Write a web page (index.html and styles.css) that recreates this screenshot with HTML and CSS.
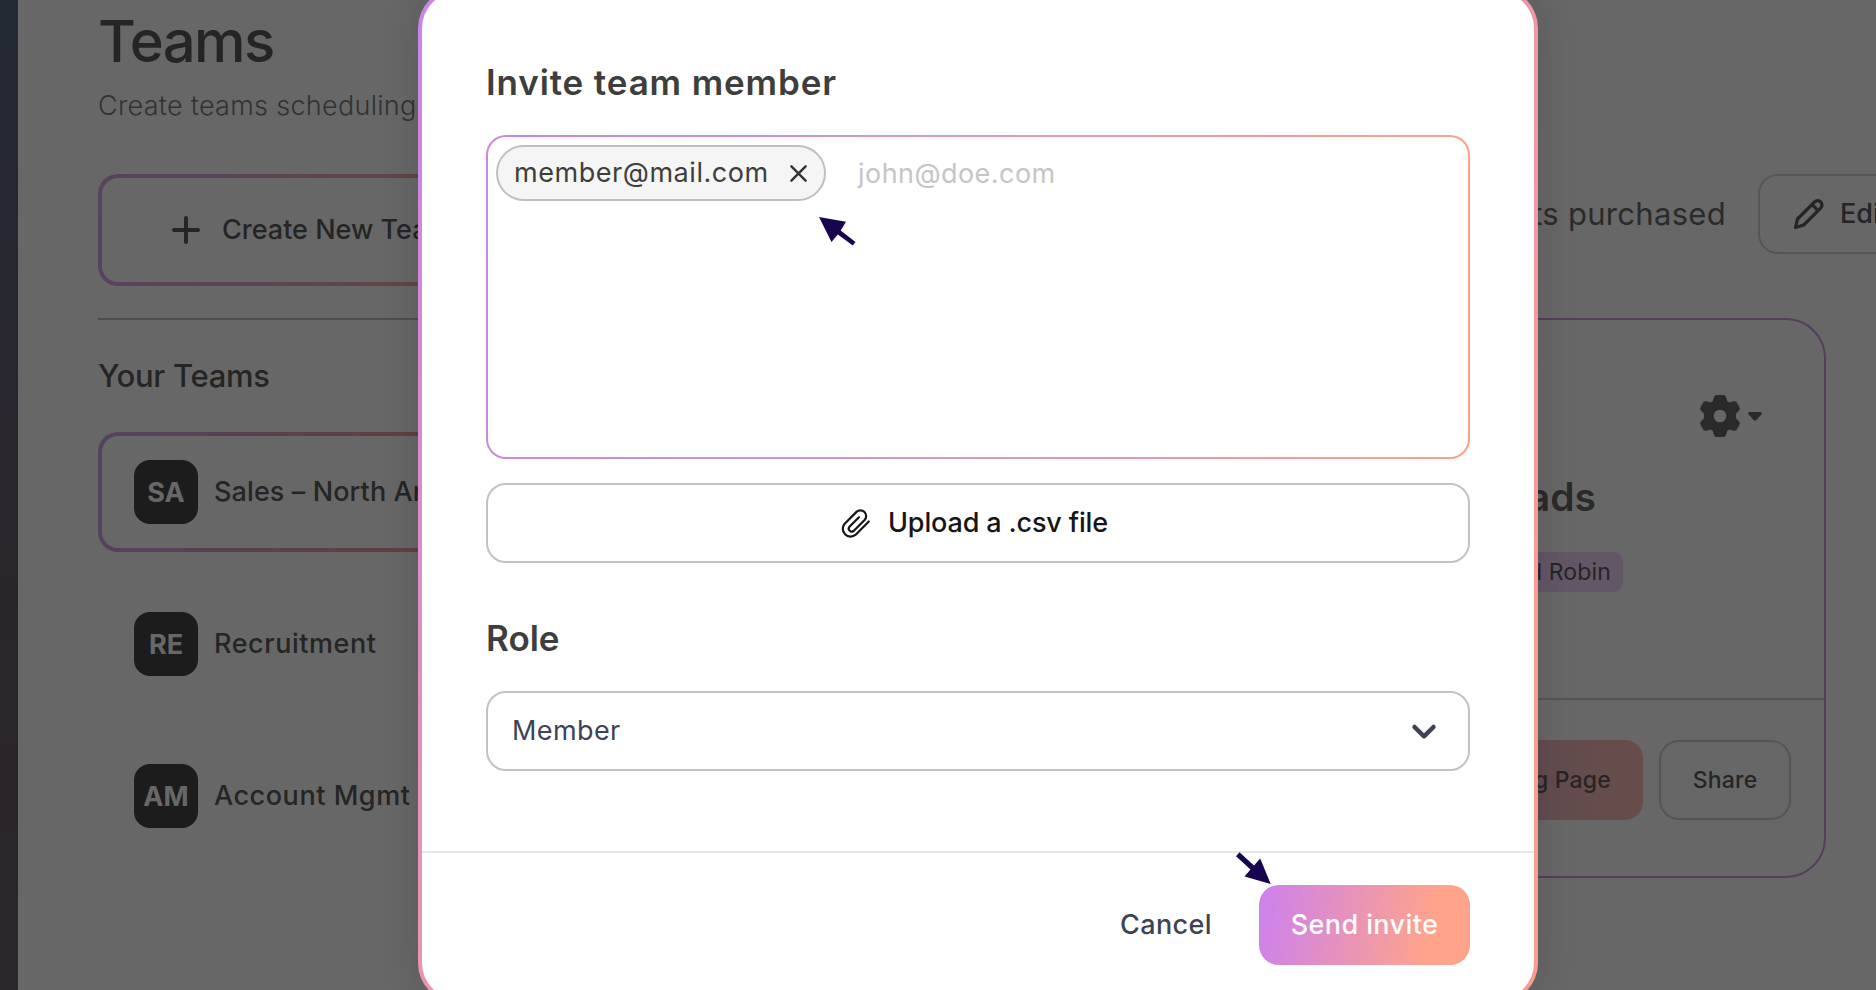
FILE: index.html
```html
<!DOCTYPE html>
<html lang="en">
<head>
<meta charset="utf-8">
<title>Teams</title>
<link rel="stylesheet" href="styles.css">
</head>
<body>
<div class="app">
  <div class="rail"></div>
  <main class="page">
    <section class="teams">
      <h1 class="title">Teams</h1>
      <p class="subtitle">Create teams scheduling</p>
      <button class="create">
        <svg class="plus" viewBox="0 0 28 28"><path d="M14 2v24M2 14h24"/></svg>
        <span>Create New Team</span>
      </button>
      <hr class="rule">
      <h2 class="your-teams">Your Teams</h2>
      <ul class="team-list">
        <li class="team team-active"><span class="avatar">SA</span><span class="team-name">Sales – North America</span></li>
        <li class="team"><span class="avatar">RE</span><span class="team-name">Recruitment</span></li>
        <li class="team"><span class="avatar">AM</span><span class="team-name">Account Mgmt</span></li>
      </ul>
    </section>
    <section class="detail">
      <div class="seats">
        <span class="seats-text">seats purchased</span>
        <button class="edit">
          <svg class="pencil" viewBox="0 0 32 32"><path d="M2.500 29.500l2-8.500L21.500 4a4.300 4.300 0 0 1 6.200 6.200L10.700 27zM19 6.500l6.300 6.300"/></svg>
          <span>Edit</span>
        </button>
      </div>
      <article class="card">
        <div class="card-body">
          <div class="settings">
            <svg class="gear" viewBox="0 0 40 42"><path fill-rule="evenodd" d="M16.500 0h7q2.200 0 2.700 2.200l1 4 2.300 1.300 4-1.200q2.200-.6 3.300 1.200l2.700 4.700q1.100 1.900-.5 3.400L36 18.700v4.600l3 3.100q1.600 1.500.5 3.400l-2.700 4.700q-1.100 1.800-3.300 1.200l-4-1.200-2.300 1.300-1 4Q25.700 42 23.500 42h-7q-2.200 0-2.700-2.200l-1-4-2.300-1.300-4 1.200q-2.200.6-3.300-1.200L.5 29.800q-1.100-1.900.5-3.400l3-3.100v-4.600l-3-3.100q-1.600-1.500-.5-3.400l2.700-4.700q1.100-1.800 3.300-1.200l4 1.200 2.300-1.300 1-4Q14.300 0 16.500 0zM20 14.700a6.300 6.300 0 1 0 0 12.600 6.300 6.300 0 0 0 0-12.600z"/></svg>
            <svg class="caret" viewBox="0 0 14 9"><path d="M1.500 0h11q2.200.4 1 2.300L8.500 8Q7 9.500 5.500 8L.5 2.300Q-.7.400 1.500 0z"/></svg>
          </div>
          <h3 class="card-title">Inbound Leads</h3>
          <span class="tag">Round Robin</span>
        </div>
        <div class="card-actions">
          <button class="booking">Booking Page</button>
          <button class="share">Share</button>
        </div>
      </article>
    </section>
  </main>
</div>
<div class="overlay"></div>
<div class="modal" role="dialog">
  <div class="modal-body">
    <h2 class="heading invite">Invite team member</h2>
    <div class="emails">
      <span class="chip">
        <span class="chip-text">member@mail.com</span>
        <svg class="close" viewBox="0 0 18 18"><path d="M1.500 1.500l15 15M16.500 1.500l-15 15"/></svg>
      </span>
      <span class="placeholder">john@doe.com</span>
    </div>
    <button class="upload">
      <svg class="clip" viewBox="10 7 32 32"><path d="M38.800 21.500L25.700 34.700a7.800 7.800 0 0 1-11-11L26.500 11.900a5.730 5.730 0 0 1 8.100 8.100L23.600 31a3 3 0 0 1-4.200-4.200l9.600-9.600"/></svg>
      <span>Upload a .csv file</span>
    </button>
    <h2 class="heading role">Role</h2>
    <div class="select">
      <span>Member</span>
      <svg class="chevron" viewBox="0 0 24 16"><path d="M2.500 4L12 13.300 21.500 4"/></svg>
    </div>
  </div>
  <div class="modal-footer">
    <button class="cancel">Cancel</button>
    <button class="send">Send invite</button>
  </div>
</div>
<svg class="pointer pointer-chip" viewBox="0 0 37 28"><path d="M0 0l27 4.700-5.300 8.800L36.500 25 33.800 28.500 18.800 17.500l-6.300 7.500z"/></svg>
<svg class="pointer pointer-send" viewBox="0 0 35 32"><path d="M34.700 32L8.500 24.600l6-7L0 4.300 3.500.3 18 13.400l6.200-7z"/></svg>
</body>
</html>
```
FILE: styles.css
```css
* { box-sizing: border-box; }
body {
  margin: 0;
  height: 990px;
  overflow: hidden;
  position: relative;
  font-family: Inter, "Noto Sans", sans-serif;
  font-size: 27px;
  color: #5c5c5c;
}
h1, h2, h3, p, ul { margin: 0; padding: 0; font-weight: 500; }
button { font: inherit; letter-spacing: inherit; color: inherit; background: none; border: 0; padding: 0; white-space: nowrap; }
svg { flex: none; overflow: visible; }
.app { display: flex; height: 990px; width: 1960px; }
.rail { width: 18px; background: linear-gradient(#59697f 0, #655f75 40%, #68606a 65%, #6c5d69 80%, #6c6270 100%); }
.page { flex: 1; display: flex; justify-content: space-between; padding-left: 80px; background: #fff; }

.teams { width: 420px; }
.title { font-size: 58px; line-height: 70px; margin-top: 6px; letter-spacing: -1.600px; }
.subtitle { font-weight: 300; line-height: 34px; margin-top: 13px; color: #7c7c7c; white-space: nowrap; letter-spacing: .29px; }
.create {
  display: flex; align-items: center; gap: 22px;
  width: 420px; height: 112px; margin-top: 51px; padding: 0 0 1px 70px;
  border: 4px solid transparent; border-radius: 20px;
  background: linear-gradient(#fff, #fff) padding-box, linear-gradient(100deg, #d9a5ee 0%, #efa9bd 60%, #ffab9c 85%) border-box;
  font-weight: 500;
}
.plus { width: 28px; height: 28px; fill: none; stroke: #5c5c5c; stroke-width: 4; stroke-linecap: round; }
.rule { margin: 32px 0 0; border: 0; height: 2px; background: #c4c4c4; }
.your-teams { font-size: 31px; line-height: 40px; margin-top: 36px; letter-spacing: -.3px; font-weight: 450; }
.team-list { list-style: none; margin-top: 36px; display: grid; gap: 32px; }
.team { display: flex; align-items: center; gap: 16px; height: 120px; padding: 0 32px; border: 4px solid transparent; border-radius: 20px; white-space: nowrap; overflow: hidden; }
.team-name { font-weight: 450; letter-spacing: .55px; margin-top: -2px; }
.team-active .team-name { letter-spacing: .1px; }
.team-active { background: linear-gradient(#fff, #fff) padding-box, linear-gradient(100deg, #d0a5ee 0%, #e5a0b9 45%, #f09f9f 75%) border-box; }
.avatar { flex: none; width: 64px; height: 64px; border-radius: 16px; background: #464646; color: #fff; display: grid; place-items: center; font-weight: 700; }

.detail { width: 660px; padding-top: 174px; }
.seats { display: flex; align-items: center; justify-content: flex-end; gap: 32px; width: 618px; }
.seats-text { font-size: 31px; white-space: nowrap; color: #6c6c6c; letter-spacing: .3px; margin-top: -2px; }
.edit { display: flex; align-items: center; gap: 15px; width: 160px; height: 80px; border: 2px solid #d4d4d4; border-radius: 20px; padding: 0 0 1px 33px; font-weight: 500; }
.pencil { width: 32px; height: 32px; fill: none; stroke: #5c5c5c; stroke-width: 3.200; stroke-linejoin: round; }
.card { width: 526px; height: 560px; margin-top: 64px; border: 2px solid #cf9ae0; border-radius: 40px; }
.card-body { height: 378px; padding: 75px 62px 0 40px; display: flex; flex-direction: column; align-items: flex-end; }
.settings { display: flex; align-items: center; gap: 8px; height: 42px; }
.gear { width: 40px; height: 42px; fill: #686868; }
.caret { width: 14px; height: 9px; fill: #686868; }
.card-title { font-size: 39px; font-weight: 600; line-height: 50px; margin: 35px 166px 0 0; white-space: nowrap; color: #686868; }
.tag { height: 40px; line-height: 40px; margin: 30px 139px 0 0; padding: 0 12px; border-radius: 10px; background: #f5d5ff; font-size: 23px; white-space: nowrap; letter-spacing: .15px; }
.card-actions { display: flex; justify-content: flex-end; gap: 16px; padding: 40px 33px 0; border-top: 2px solid #d2d2d2; font-size: 23px; font-weight: 450; letter-spacing: .2px; }
.booking { width: 230px; height: 80px; border-radius: 18px; padding-right: 32px; text-align: right; background: linear-gradient(90deg, #f0b8ff, #f0bac6 45%, #ffc0b5); }
.share { width: 132px; height: 80px; border: 2px solid #d2d2d2; border-radius: 20px; }

.overlay { position: absolute; inset: 0; background: rgba(0, 0, 0, .595); }
.modal {
  position: absolute; left: 418px; top: -12px; width: 1120px; height: 1015px;
  border: 4px solid transparent; border-radius: 40px;
  background: linear-gradient(#fff, #fff) padding-box, linear-gradient(135deg, #c884ea 0%, #ec96ab 50%, #fb9c90 85%) border-box;
  box-shadow: 0 0 40px rgba(0, 0, 0, .13);
}
.modal-body { height: 859px; padding: 66px 64px 0; display: flex; flex-direction: column; }
.heading { font-size: 35px; line-height: 48px; font-weight: 600; color: #3e3e3e; }
.invite { letter-spacing: .87px; }
.emails {
  display: flex; align-items: flex-start; gap: 32px; height: 324px; margin-top: 29px; padding: 8px;
  border: 2px solid transparent; border-radius: 20px;
  background: linear-gradient(#fff, #fff) padding-box, linear-gradient(90deg, #cb88df 0%, #d79abd 50%, #ff9f87 100%) border-box;
}
.chip { display: flex; align-items: center; justify-content: space-between; width: 330px; height: 56px; padding: 0 17px 0 16px; border: 2px solid #bfbfbf; border-radius: 28px; background: #f5f5f5; color: #3e3e3e; }
.chip-text { letter-spacing: .55px; margin-top: -2px; }
.close { width: 17px; height: 17px; fill: none; stroke: #333; stroke-width: 2.600; stroke-linecap: round; }
.placeholder { line-height: 57px; color: #c5c5c7; letter-spacing: .45px; }
.upload { display: flex; align-items: center; justify-content: center; gap: 16px; height: 80px; flex: none; margin-top: 24px; padding: 0 8px 0 0; border: 2px solid #c2c2c2; border-radius: 20px; color: #161616; font-weight: 500; letter-spacing: -.15px; }
.upload span { margin-top: -2px; }
.clip { width: 32px; height: 32px; fill: none; stroke: #161616; stroke-width: 2.200; stroke-linecap: round; stroke-linejoin: round; }
.role { margin-top: 51px; }
.select { display: flex; align-items: center; justify-content: space-between; height: 80px; margin-top: 29px; padding: 0 32px 0 24px; border: 2px solid #c2c2c2; border-radius: 20px; color: #3d4354; letter-spacing: .4px; }
.select span { margin-top: -2px; }
.chevron { width: 24px; height: 16px; fill: none; stroke: #3d4354; stroke-width: 4.500; stroke-linecap: round; stroke-linejoin: round; }
.modal-footer { display: flex; justify-content: flex-end; align-items: flex-start; gap: 47px; padding: 32px 64px 0; border-top: 2px solid #e5e7e9; font-weight: 450; letter-spacing: .4px; }
.cancel { height: 80px; padding-bottom: 2px; color: #3d4354; }
.send { width: 211px; height: 80px; padding-bottom: 2px; border-radius: 20px; color: #fff; background: linear-gradient(100deg, #cf82e8 5%, #ffa38b 80%); }
.pointer { position: absolute; fill: #180550; }
.pointer-chip { left: 819px; top: 217px; width: 37px; height: 28px; }
.pointer-send { left: 1236px; top: 852px; width: 35px; height: 32px; }
```
